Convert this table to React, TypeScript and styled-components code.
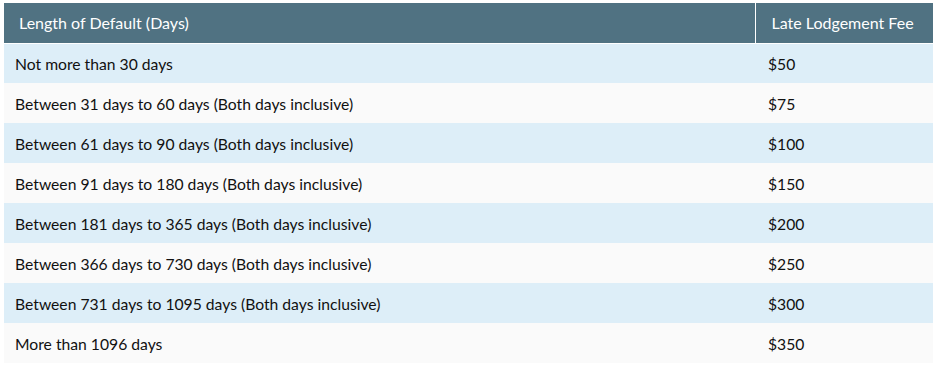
import React from "react";
import styled, { createGlobalStyle } from "styled-components";

const GlobalStyle = createGlobalStyle`
  body {
    margin: 0;
    background: #ffffff;
    font-family: Lato, "Open Sans", sans-serif;
  }
`;

const Wrapper = styled.div`
  padding: 3px 0 0 4px;
`;

const Table = styled.table`
  width: 929px;
  border-collapse: collapse;
  font-size: 15.7px;
  color: #111;
`;

const HeadCell = styled.th<{ $divider?: boolean }>`
  box-sizing: border-box;
  height: 40px;
  padding: 0 0 0 ${(p) => (p.$divider ? "16px" : "15px")};
  background: #507282;
  color: #ffffff;
  font-size: 16px;
  font-weight: 400;
  text-align: left;
  border-bottom: 1px solid #ffffff;
  border-left: ${(p) => (p.$divider ? "1px solid #ffffff" : "none")};
`;

const Row = styled.tr<{ $odd: boolean }>`
  background: ${(p) => (p.$odd ? "#ddeef8" : "#fafafa")};
`;

const Cell = styled.td<{ $fee?: boolean }>`
  box-sizing: border-box;
  height: 40px;
  padding: 2px 0 0 ${(p) => (p.$fee ? "13px" : "11px")};
`;

const rows = [
  ["Not more than 30 days", "$50"],
  ["Between 31 days to 60 days (Both days inclusive)", "$75"],
  ["Between 61 days to 90 days (Both days inclusive)", "$100"],
  ["Between 91 days to 180 days (Both days inclusive)", "$150"],
  ["Between 181 days to 365 days (Both days inclusive)", "$200"],
  ["Between 366 days to 730 days (Both days inclusive)", "$250"],
  ["Between 731 days to 1095 days (Both days inclusive)", "$300"],
  ["More than 1096 days", "$350"],
];

const App = () => {
  return (
    <Wrapper>
      <GlobalStyle />
      <Table>
        <thead>
          <tr>
            <HeadCell style={{ width: 751 }}>Length of Default (Days)</HeadCell>
            <HeadCell $divider>Late Lodgement Fee</HeadCell>
          </tr>
        </thead>
        <tbody>
          {rows.map((r, i) => (
            <Row key={i} $odd={i % 2 === 0}>
              <Cell>{r[0]}</Cell>
              <Cell $fee>{r[1]}</Cell>
            </Row>
          ))}
        </tbody>
      </Table>
    </Wrapper>
  );
};

export default App;
